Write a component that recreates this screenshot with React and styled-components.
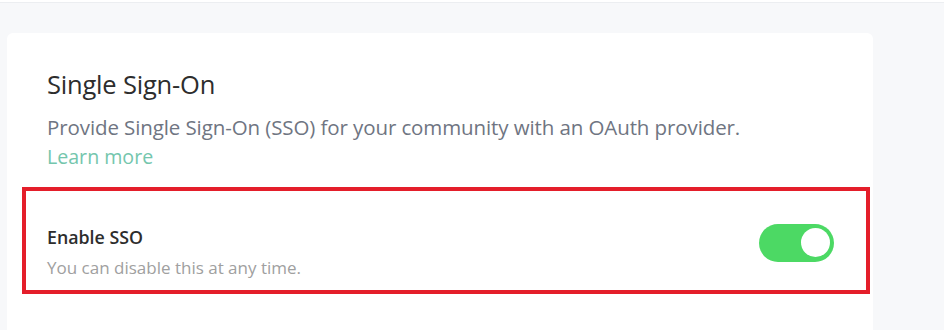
import React from 'react'
import styled, { createGlobalStyle } from 'styled-components'

const Global = createGlobalStyle`
    html, body {
        margin: 0;
        padding: 0;
        background: #f7f8fa;
        font-family: "Open Sans", "Noto Sans", sans-serif;
    }
`
const Page = styled.div`
    height: 330px;
    overflow: hidden;
    border-top: 2px solid #fff;
    padding: 0 71px 0 7px;
    box-sizing: border-box;
    &::before {
        content: '';
        display: block;
        height: 1px;
        margin: 0 -71px 0 -7px;
        background: #eceef1;
    }
`
const Card = styled.section`
    margin-top: 30px;
    width: 866px;
    height: 320px;
    background: #fff;
    border-radius: 6px;
    box-sizing: border-box;
    padding: 0 3px 0 15px;
`
const Header = styled.div`
    padding: 36px 25px 0;
    display: flex;
    flex-direction: column;
`
const Title = styled.h2`
    margin: 0;
    font-size: 25.5px;
    font-weight: 400;
    color: #2d2d2d;
    line-height: 30px;
    letter-spacing: -0.2px;
`
const Description = styled.p`
    margin: 13px 0 0;
    font-size: 20.5px;
    color: #6f7582;
    line-height: 30px;
    letter-spacing: -0.1px;
`
const Link = styled.a`
    font-size: 19.6px;
    color: #74c6ad;
    line-height: 30px;
    text-decoration: none;
`
const Row = styled.div`
    margin-top: 15px;
    height: 107px;
    box-sizing: border-box;
    border: 4px solid #e41e2a;
    display: flex;
    align-items: center;
    justify-content: space-between;
    padding: 4px 32px 0 21px;
`
const Label = styled.div`
    display: flex;
    flex-direction: column;
    gap: 7px;
    padding-top: 20px;
`
const Name = styled.span`
    font-size: 17.8px;
    font-weight: 600;
    color: #2d2d2d;
    line-height: 24px;
`
const Hint = styled.span`
    font-size: 17px;
    color: #a0a0a0;
    line-height: 24px;
`
const Switch = styled.button`
    width: 75px;
    height: 38px;
    border: none;
    border-radius: 19px;
    background: ${p => (p.$on ? '#4cd964' : '#d5d8dc')};
    padding: 4px;
    display: flex;
    justify-content: ${p => (p.$on ? 'flex-end' : 'flex-start')};
    align-items: center;
    cursor: pointer;
    box-sizing: border-box;
    &::after {
        content: '';
        width: 29px;
        height: 29px;
        border-radius: 50%;
        background: #fff;
    }
`

export default function App() {
  return (
    <>
      <Global />
      <Page>
        <Card>
          <Header>
            <Title>Single Sign-On</Title>
            <Description>Provide Single Sign-On (SSO) for your community with an OAuth provider.</Description>
            <Link href="#">Learn more</Link>
          </Header>
          <Row>
            <Label>
              <Name>Enable SSO</Name>
              <Hint>You can disable this at any time.</Hint>
            </Label>
            <Switch $on aria-label="Enable SSO" />
          </Row>
        </Card>
      </Page>
    </>
  )
}
